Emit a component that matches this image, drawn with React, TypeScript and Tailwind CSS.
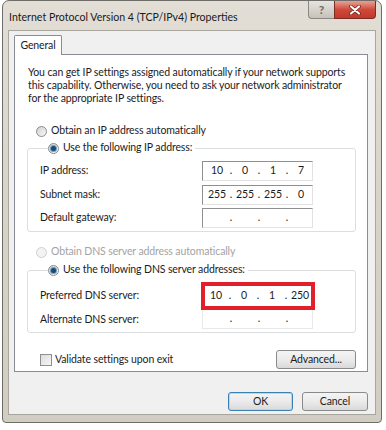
import React from "react";

function Radio({ checked, disabled }: { checked?: boolean; disabled?: boolean }) {
  return (
    <span
      className={`flex h-[11px] w-[11px] shrink-0 items-center justify-center rounded-full border ${
        disabled
          ? "border-[#cfcfcf] bg-[#f3f3f3]"
          : "border-[#8a8b8c] bg-linear-to-br from-[#cfd0d1] to-[#fafafa]"
      }`}
    >
      {checked && <span className="h-[5px] w-[5px] rounded-full bg-[#1d4a73] ring-1 ring-[#6f9cc4]" />}
    </span>
  );
}

function RadioRow({
  label,
  checked,
  disabled,
  className = "",
}: {
  label: string;
  checked?: boolean;
  disabled?: boolean;
  className?: string;
}) {
  return (
    <div className={`flex h-[16px] items-center gap-[4px] ${disabled ? "text-[#a3a3a3]" : ""} ${className}`}>
      <Radio checked={checked} disabled={disabled} />
      <span>{label}</span>
    </div>
  );
}

function IpSegments({ parts }: { parts: string[] }) {
  return (
    <div className="flex h-full items-center">
      {parts.map((p, i) => (
        <React.Fragment key={i}>
          {i > 0 && <span className="w-[6px] text-center">.</span>}
          <span className="w-[22px] text-center">{p}</span>
        </React.Fragment>
      ))}
    </div>
  );
}

function IpField({ parts }: { parts: string[] }) {
  return (
    <div className="h-[20px] w-[111px] border border-t-[#8f8f8f] border-l-[#8f8f8f] border-r-[#e2e2e2] border-b-[#e2e2e2] pl-[3px]">
      <IpSegments parts={parts} />
    </div>
  );
}

function Button({ children, className = "" }: { children: React.ReactNode; className?: string }) {
  return (
    <div
      className={`flex h-[19px] items-center justify-center rounded-[3px] border bg-linear-to-b from-[#f4f4f4] via-[#ebebeb] to-[#d9d9d9] ${className}`}
    >
      {children}
    </div>
  );
}

export default function App() {
  const empty = ["", "", "", ""];
  return (
    <div className="h-[430px] w-[386px] bg-white pl-[2px] font-['Lato',sans-serif] text-[10.5px] tracking-[-0.12px] text-[#1c1c1c]">
      <div className="flex h-[423px] w-[380px] flex-col rounded-t-[7px] rounded-b-[4px] border border-[#6f6d68] bg-linear-to-b from-[#e2ded6] via-[#d8d3c9] to-[#d2cdc3] px-[5px] pb-[7px]">
        {/* title bar */}
        <div className="flex h-[29px] items-start justify-between">
          <div className="pl-[1px] pt-[8px] text-[10.6px] leading-[16px] tracking-normal text-[#1a1a1a]">
            Internet Protocol Version 4 (TCP/IPv4) Properties
          </div>
          <div className="flex">
            <div className="flex h-[18px] w-[26px] items-center justify-center rounded-bl-[4px] border border-t-0 border-r-0 border-[#8b8881] bg-linear-to-b from-[#e6e4df] to-[#c6c2ba] text-[12px] font-bold text-[#6a6a6a]">
              ?
            </div>
            <div className="flex h-[18px] w-[42px] items-center justify-center rounded-br-[4px] border border-t-0 border-[#7c2c22] bg-linear-to-b from-[#e5a197] via-[#cf4a3a] to-[#c2382a]">
              <svg width="12" height="10" viewBox="0 0 12 10">
                <path d="M2 1.5 L10 8.5 M10 1.5 L2 8.5" stroke="#6b1d14" strokeWidth="3.6" strokeLinecap="round" />
                <path d="M2 1.5 L10 8.5 M10 1.5 L2 8.5" stroke="#ffffff" strokeWidth="2.2" strokeLinecap="round" />
              </svg>
            </div>
          </div>
        </div>

        {/* client area */}
        <div className="flex flex-1 flex-col border border-[#a9a69e] bg-[#f0f0f0] pl-[5px] pr-[7px] pt-[4px]">
          <div className="flex">
            <div className="relative z-10 -mb-px flex h-[20px] w-[48px] items-center justify-center rounded-t-[2px] border border-b-0 border-[#898c95] bg-white">
              General
            </div>
          </div>
          <div className="flex h-[318px] flex-col border border-[#898c95] bg-white pl-[12px] pr-[11px] pt-[11px] pb-[2px]">
            <p className="whitespace-nowrap pl-[1px] leading-[13px]">
              You can get IP settings assigned automatically if your network supports
              <br />
              this capability. Otherwise, you need to ask your network administrator
              <br />
              for the appropriate IP settings.
            </p>

            <RadioRow className="mt-[18px] pl-[9px]" label="Obtain an IP address automatically" />
            <fieldset className="mt-[1px] rounded-[3px] border border-[#dcdfe2] pl-[12px] pb-[3px]">
              <legend className="ml-[8px] pr-[3px]">
                <RadioRow checked label="Use the following IP address:" />
              </legend>
              <div className="mt-[5px] grid grid-cols-[162px_111px] items-center gap-y-[3.5px]">
                <span>IP address:</span>
                <IpField parts={["10", "0", "1", "7"]} />
                <span>Subnet mask:</span>
                <IpField parts={["255", "255", "255", "0"]} />
                <span>Default gateway:</span>
                <IpField parts={empty} />
              </div>
            </fieldset>

            <RadioRow disabled className="mt-[12px] pl-[9px]" label="Obtain DNS server address automatically" />
            <fieldset className="mt-[2px] rounded-[3px] border border-[#dcdfe2] pl-[12px] pb-[3px]">
              <legend className="ml-[8px] pr-[3px]">
                <RadioRow checked label="Use the following DNS server addresses:" />
              </legend>
              <div className="mt-[4px] grid grid-cols-[162px_114px] items-center">
                <span>Preferred DNS server:</span>
                <div className="-ml-px h-[28px] w-[114px] border-[4px] border-[#e1202b]">
                  <IpSegments parts={["10", "0", "1", "250"]} />
                </div>
                <span>Alternate DNS server:</span>
                <div className="h-[19px] w-[111px] border border-t-0 border-[#e8e8e8] pl-[3px]">
                  <IpSegments parts={empty} />
                </div>
              </div>
            </fieldset>

            <div className="mt-auto flex items-center justify-between">
              <div className="flex items-center gap-[3px] pl-[13px]">
                <span className="h-[12px] w-[12px] border border-[#8e8f8f] bg-linear-to-br from-[#dcdcdc] to-[#f7f7f7]" />
                <span>Validate settings upon exit</span>
              </div>
              <Button className="h-[18px] w-[80px] border-[#8a8a8a]">Advanced...</Button>
            </div>
          </div>

          <div className="mt-[20px] flex justify-end gap-[9px]">
            <Button className="w-[65px] border-[#3c7fb1] shadow-[inset_0_0_0_1px_#a9dcf5]">OK</Button>
            <Button className="w-[66px] border-[#8a8a8a]">Cancel</Button>
          </div>
        </div>
      </div>
    </div>
  );
}
